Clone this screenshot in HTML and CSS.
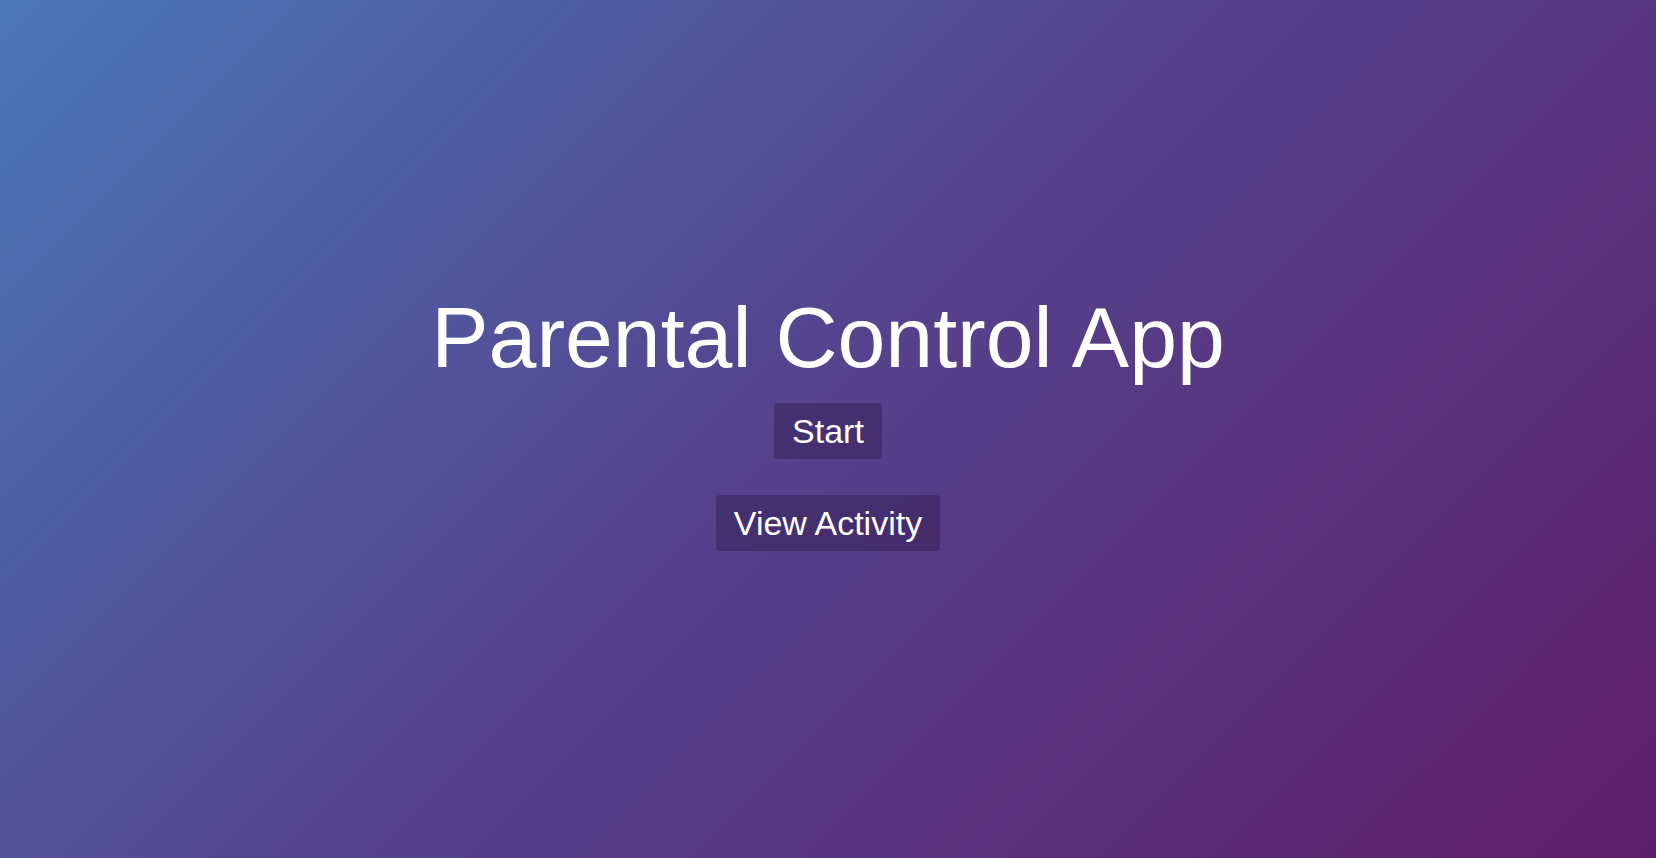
FILE: index.html
```html
<!DOCTYPE html>
<html lang="en">
<head>
<meta charset="utf-8">
<title>Parental Control App</title>
<link rel="stylesheet" href="styles.css">
</head>
<body>
<main class="hero">
  <h1 class="hero-title">Parental Control App</h1>
  <div class="hero-actions">
    <button class="btn">Start</button>
    <button class="btn">View Activity</button>
  </div>
</main>
</body>
</html>
```

FILE: styles.css
```css
html, body {
  margin: 0;
  padding: 0;
  height: 100%;
}
body {
  font-family: "Liberation Sans", Arial, Helvetica, sans-serif;
  color: #fff;
  background: linear-gradient(135deg, #4a77b8 0%, #54458f 45%, #5f1d69 100%);
}
.hero {
  height: 100%;
  box-sizing: border-box;
  display: flex;
  flex-direction: column;
  align-items: center;
  justify-content: center;
  padding-bottom: 13px;
}
.hero-title {
  margin: 0 0 23px;
  font-size: 86px;
  font-weight: 400;
  line-height: 1;
}
.hero-actions {
  display: flex;
  flex-direction: column;
  align-items: center;
  gap: 36px;
}
.btn {
  font-family: inherit;
  font-size: 34px;
  line-height: 40px;
  padding: 8px 18px;
  color: #fff;
  background: rgba(30, 10, 50, 0.3);
  border: none;
  border-radius: 4px;
  cursor: pointer;
}
```
